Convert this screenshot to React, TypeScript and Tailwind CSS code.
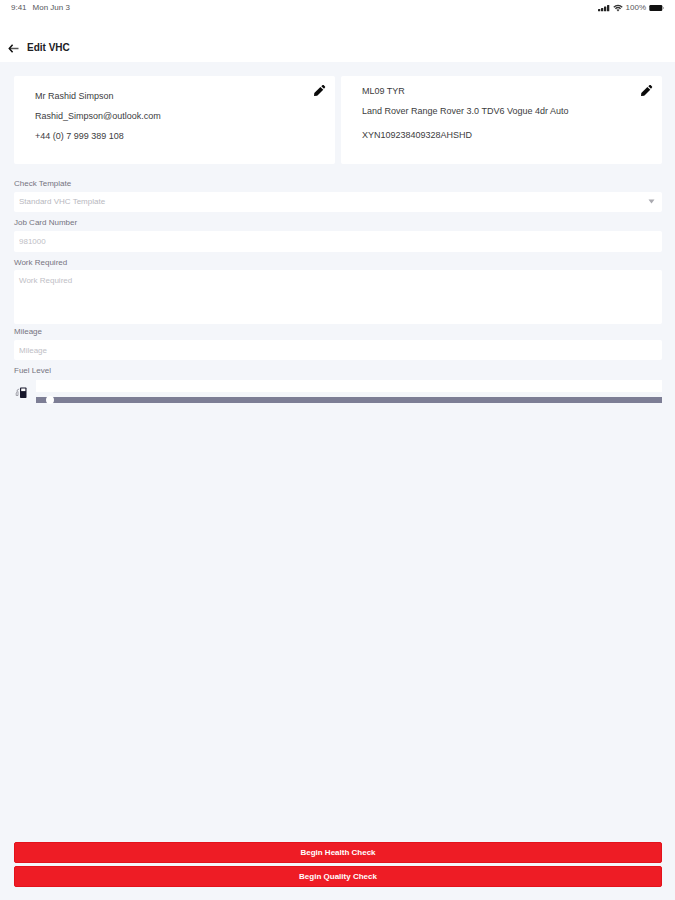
import { useState } from 'react'
import type { ReactNode } from 'react'

const labelClass = 'block text-[8px] leading-3 text-[#74747f]'
const fieldClass = 'block w-full rounded-xs bg-white px-[5px] text-[8px] text-[#b8b8c0] placeholder:text-[#c0c0c6] focus:outline-none focus:ring-1 focus:ring-[#6f7088]'

function StatusBar() {
  return (
    <div className="flex h-4 items-center justify-between pl-[11px] pr-[11px] text-[8px] text-[#55555a]">
      <div className="flex gap-[6px]">
        <span>9:41</span>
        <span>Mon Jun 3</span>
      </div>
      <div className="flex items-center gap-[2px]">
        <svg width="12" height="8" viewBox="0 0 12 8" fill="#222">
          <rect x="0" y="5" width="2.3" height="2.2" rx="0.5" />
          <rect x="3" y="4" width="2.3" height="3.2" rx="0.5" />
          <rect x="6" y="2.5" width="2.3" height="4.7" rx="0.5" />
          <rect x="9" y="1" width="2.3" height="6.2" rx="0.5" />
        </svg>
        <svg className="ml-[1px]" width="10" height="8" viewBox="0 0 10 8" fill="none" stroke="#333" strokeWidth="1.4">
          <path d="M0.8 3.2C3.2 0.7 6.8 0.7 9.2 3.2" />
          <path d="M2.4 4.8C4 3.3 6 3.3 7.6 4.8" />
          <path d="M3.5 5.7L5 7.5L6.5 5.7C5.6 5 4.4 5 3.5 5.7Z" fill="#333" stroke="none" />
        </svg>
        <span className="ml-[1px]">100%</span>
        <svg className="ml-[1px]" width="15" height="8" viewBox="0 0 15 8">
          <rect x="0.3" y="1" width="13" height="6" rx="1.2" fill="#111" />
          <path d="M14.3 3V5" stroke="#888" strokeWidth="0.8" />
        </svg>
      </div>
    </div>
  )
}

function InfoCard({ editLabel, children }: { editLabel: string; children: ReactNode }) {
  return (
    <section className="relative h-[88px] flex-1 rounded-xs bg-white text-[9px] leading-3 text-[#3c3c40]">
      {children}
      <button type="button" aria-label={editLabel} className="absolute right-[9px] top-2">
        <svg width="13" height="13" viewBox="0 0 13 13" fill="#0a0a0a">
          <path d="M1 12L1.3 9L7.4 3L10.3 5.7L4.2 11.7Z" />
          <path d="M8.3 2.2L9.6 1.1C9.9 0.8 10.3 0.8 10.6 1.1L12 2.4C12.3 2.7 12.3 3.1 12 3.4L11 4.8Z" />
        </svg>
      </button>
    </section>
  )
}

export default function App() {
  const [template, setTemplate] = useState('standard')
  const [jobCard, setJobCard] = useState('')
  const [work, setWork] = useState('')
  const [mileage, setMileage] = useState('')
  const [fuel, setFuel] = useState(1)

  return (
    <div className="flex min-h-screen flex-col bg-[#f4f6fa] font-['Liberation_Sans',sans-serif]">
      <header className="h-[62px] bg-white">
        <StatusBar />
        <div className="flex items-center gap-2 pl-2 pt-6">
          <button type="button" aria-label="Back">
            <svg width="11" height="9" viewBox="0 0 11 9" fill="none" strokeWidth="1.5">
              <path d="M1.5 4.5H10.5" stroke="#555" />
              <path d="M4.6 0.8L1.3 4.5L4.6 8.2" stroke="#111" />
            </svg>
          </button>
          <h1 className="text-[10px] font-bold leading-4 text-[#202024]">Edit VHC</h1>
        </div>
      </header>

      <main className="flex flex-1 flex-col pb-[13px] pl-[14px] pr-[13px] pt-[14px]">
        <div className="flex gap-[6px]">
          <InfoCard editLabel="Edit customer">
            <div className="flex flex-col gap-2 pl-[21px] pt-[14px]">
              <p>Mr Rashid Simpson</p>
              <p>Rashid_Simpson@outlook.com</p>
              <p>+44 (0) 7 999 389 108</p>
            </div>
          </InfoCard>
          <InfoCard editLabel="Edit vehicle">
            <div className="flex flex-col pl-[21px] pt-[9px]">
              <p>ML09 TYR</p>
              <p className="mt-2">Land Rover Range Rover 3.0 TDV6 Vogue 4dr Auto</p>
              <p className="mt-3">XYN109238409328AHSHD</p>
            </div>
          </InfoCard>
        </div>

        <form className="mt-[14px] flex flex-col gap-[5px]" onSubmit={e => e.preventDefault()}>
          <div>
            <label htmlFor="template" className={labelClass}>Check Template</label>
            <div className="relative mt-[2px]">
              <select id="template" className={`${fieldClass} h-5 appearance-none`} value={template} onChange={e => setTemplate(e.target.value)}>
                <option value="standard">Standard VHC Template</option>
              </select>
              <svg className="pointer-events-none absolute right-[7px] top-[7px]" width="7" height="5" viewBox="0 0 7 5" fill="#aaaab0">
                <path d="M0.5 0.5H6.5L3.5 4.5Z" />
              </svg>
            </div>
          </div>
          <div>
            <label htmlFor="job-card" className={labelClass}>Job Card Number</label>
            <input id="job-card" className={`${fieldClass} mt-[2px] h-[21px]`} placeholder="981000" value={jobCard} onChange={e => setJobCard(e.target.value)} />
          </div>
          <div>
            <label htmlFor="work" className={labelClass}>Work Required</label>
            <textarea id="work" className={`${fieldClass} mt-[1px] h-[54px] resize-none py-[5px] leading-3`} placeholder="Work Required" value={work} onChange={e => setWork(e.target.value)} />
          </div>
          <div className="-mt-[3px]">
            <label htmlFor="mileage" className={labelClass}>Mileage</label>
            <input id="mileage" className={`${fieldClass} mt-[2px] h-5`} placeholder="Mileage" value={mileage} onChange={e => setMileage(e.target.value)} />
          </div>
          <div>
            <label htmlFor="fuel" className={labelClass}>Fuel Level</label>
            <div className="mt-[3px] flex gap-[9px]">
              <svg className="ml-[1px] mt-[7px] shrink-0" width="12" height="12" viewBox="0 0 12 12">
                <path d="M4.2 2L2.2 3V5L1.2 6V8.5H3V4.5" fill="none" stroke="#8a8a94" strokeWidth="0.8" />
                <rect x="5" y="0.5" width="6.5" height="10.5" rx="0.8" fill="#16162a" />
                <rect x="6.2" y="1.5" width="4.2" height="2.6" fill="#fff" />
              </svg>
              <div className="flex-1">
                <div className="h-3 bg-white" />
                <input
                  id="fuel"
                  type="range"
                  min={0}
                  max={60}
                  value={fuel}
                  onChange={e => setFuel(parseInt(e.target.value, 10))}
                  className="mt-[3px] block h-[10px] w-full appearance-none bg-transparent [&::-webkit-slider-runnable-track]:h-[6px] [&::-webkit-slider-runnable-track]:bg-[#7d7e95] [&::-webkit-slider-thumb]:-mt-[1px] [&::-webkit-slider-thumb]:size-2 [&::-webkit-slider-thumb]:appearance-none [&::-webkit-slider-thumb]:rounded-full [&::-webkit-slider-thumb]:bg-white"
                />
              </div>
            </div>
          </div>
        </form>

        <div className="mt-auto flex flex-col gap-[3px] text-[8px] font-bold text-white">
          <button type="button" className="h-[21px] rounded-xs border border-[#e3121b] bg-[#ee1c25]">Begin Health Check</button>
          <button type="button" className="h-[21px] rounded-xs border border-[#e3121b] bg-[#ee1c25]">Begin Quality Check</button>
        </div>
      </main>
    </div>
  )
}
